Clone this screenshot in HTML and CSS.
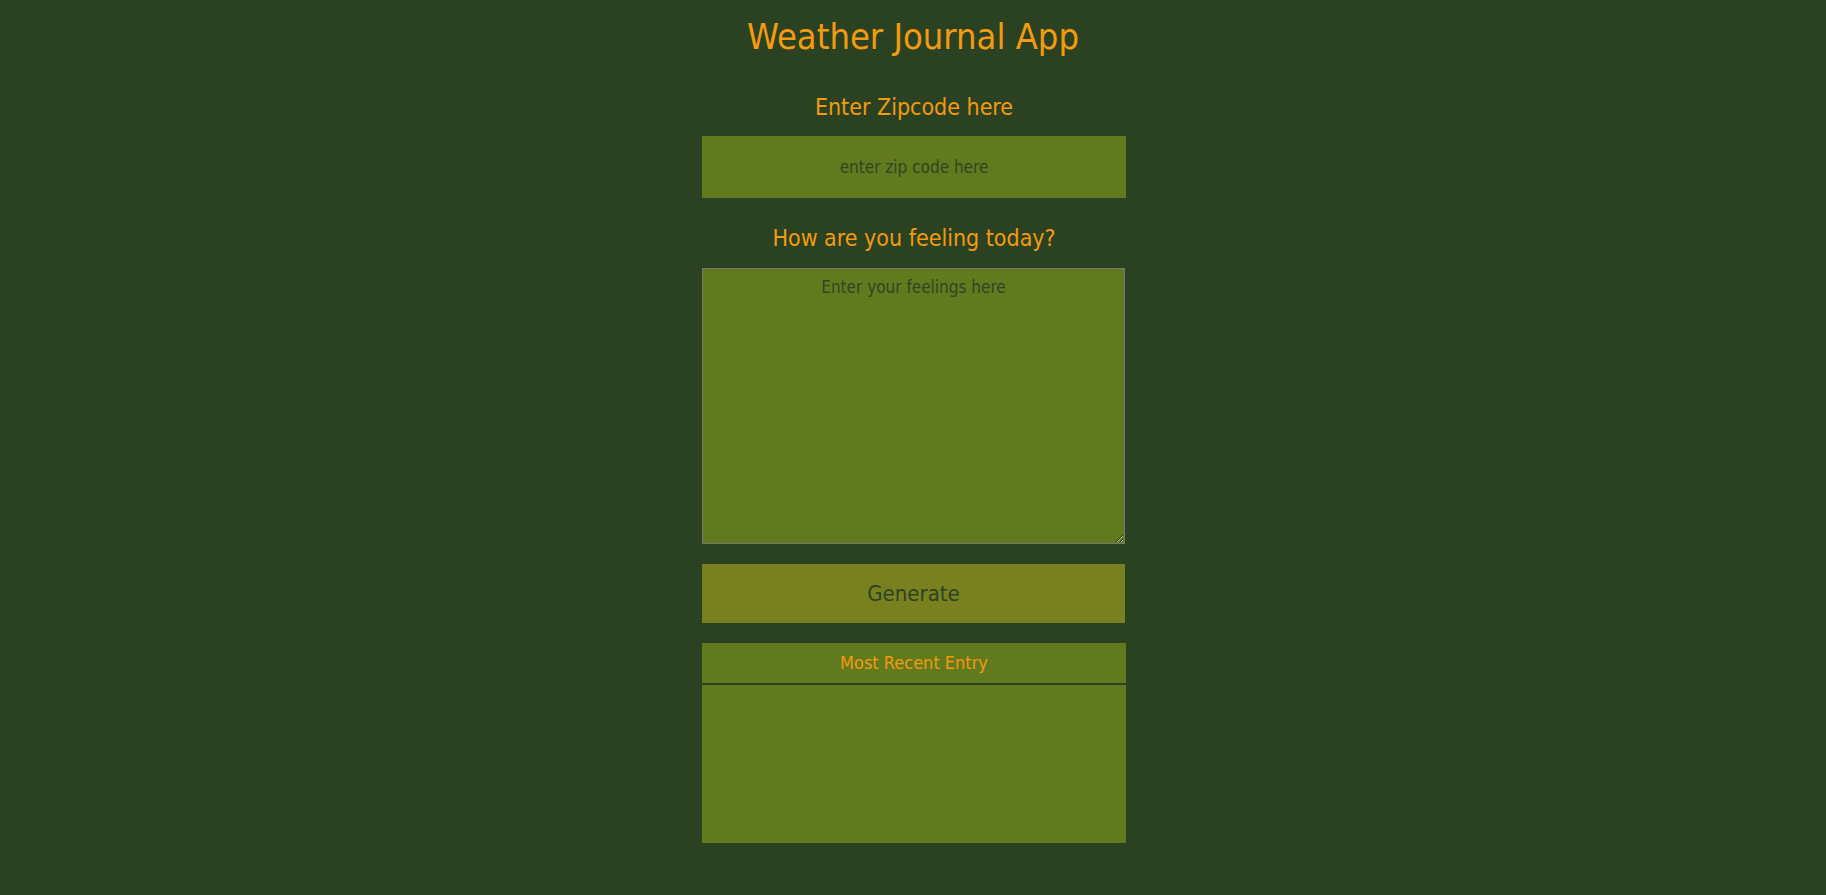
FILE: index.html
```html
<!DOCTYPE html>
<html lang="en">
<head>
<meta charset="utf-8">
<title>Weather Journal App</title>
<link rel="stylesheet" href="styles.css">
</head>
<body>
<main class="app">
  <h1 class="app-title">Weather Journal App</h1>
  <div class="holder">
    <label class="field-label zip-label" for="zip">Enter Zipcode here</label>
    <input class="zip-input" id="zip" type="text" placeholder="enter zip code here">
    <label class="field-label feel-label" for="feelings">How are you feeling today?</label>
    <textarea class="feel-input" id="feelings" placeholder="Enter your feelings here"></textarea>
    <button class="generate" type="button">Generate</button>
    <section class="entry">
      <div class="entry-title">Most Recent Entry</div>
      <div class="entry-body">
        <div class="entry-date"></div>
        <div class="entry-temp"></div>
        <div class="entry-content"></div>
      </div>
    </section>
  </div>
</main>
</body>
</html>
```

FILE: styles.css
```css
html, body {
  margin: 0;
  padding: 0;
}
body {
  background: #2b4222;
  font-family: "DejaVu Sans Condensed", "Liberation Sans", sans-serif;
  color: #f39a10;
}
.app {
  display: flex;
  flex-direction: column;
  align-items: center;
}
.app-title {
  margin: 0;
  padding-top: 19px;
  height: 36px;
  font-size: 36px;
  line-height: 36px;
  font-weight: normal;
  color: #f39a10;
  text-align: center;
}
.holder {
  width: 424px;
  margin-top: 41px;
  margin-left: 2px;
  display: flex;
  flex-direction: column;
  align-items: flex-start;
  padding-bottom: 52px;
}
.field-label {
  align-self: stretch;
  text-align: center;
  font-size: 23px;
  line-height: 23px;
  height: 23px;
  color: #f39a10;
  margin-bottom: 17px;
}
.feel-label {
  margin-top: 29px;
  margin-bottom: 18px;
}
.zip-input {
  box-sizing: border-box;
  width: 424px;
  height: 62px;
  border: none;
  outline: none;
  background: #627a1e;
  text-align: center;
  font-family: inherit;
  font-size: 17px;
  color: #2d4424;
  padding: 0;
}
.zip-input::placeholder,
.feel-input::placeholder {
  color: #2f4526;
  opacity: 1;
}
.feel-input {
  box-sizing: border-box;
  width: 423px;
  height: 276px;
  margin: 0;
  border: 1px solid #767676;
  background: #627a1e;
  text-align: center;
  font-family: inherit;
  font-size: 17px;
  color: #2d4424;
  padding: 8px 2px 2px;
  outline: none;
}
.generate {
  box-sizing: border-box;
  width: 423px;
  height: 59px;
  margin-top: 20px;
  border: none;
  background: #78801f;
  color: #2d4424;
  font-family: inherit;
  font-size: 22px;
  padding: 0;
}
.entry {
  width: 424px;
  margin-top: 20px;
  display: flex;
  flex-direction: column;
}
.entry-title {
  height: 40px;
  line-height: 40px;
  font-size: 18px;
  text-align: center;
  color: #f39a10;
  background: #627a1e;
  border-bottom: 2px solid #2b4222;
}
.entry-body {
  height: 158px;
  background: #627a1e;
}
```
